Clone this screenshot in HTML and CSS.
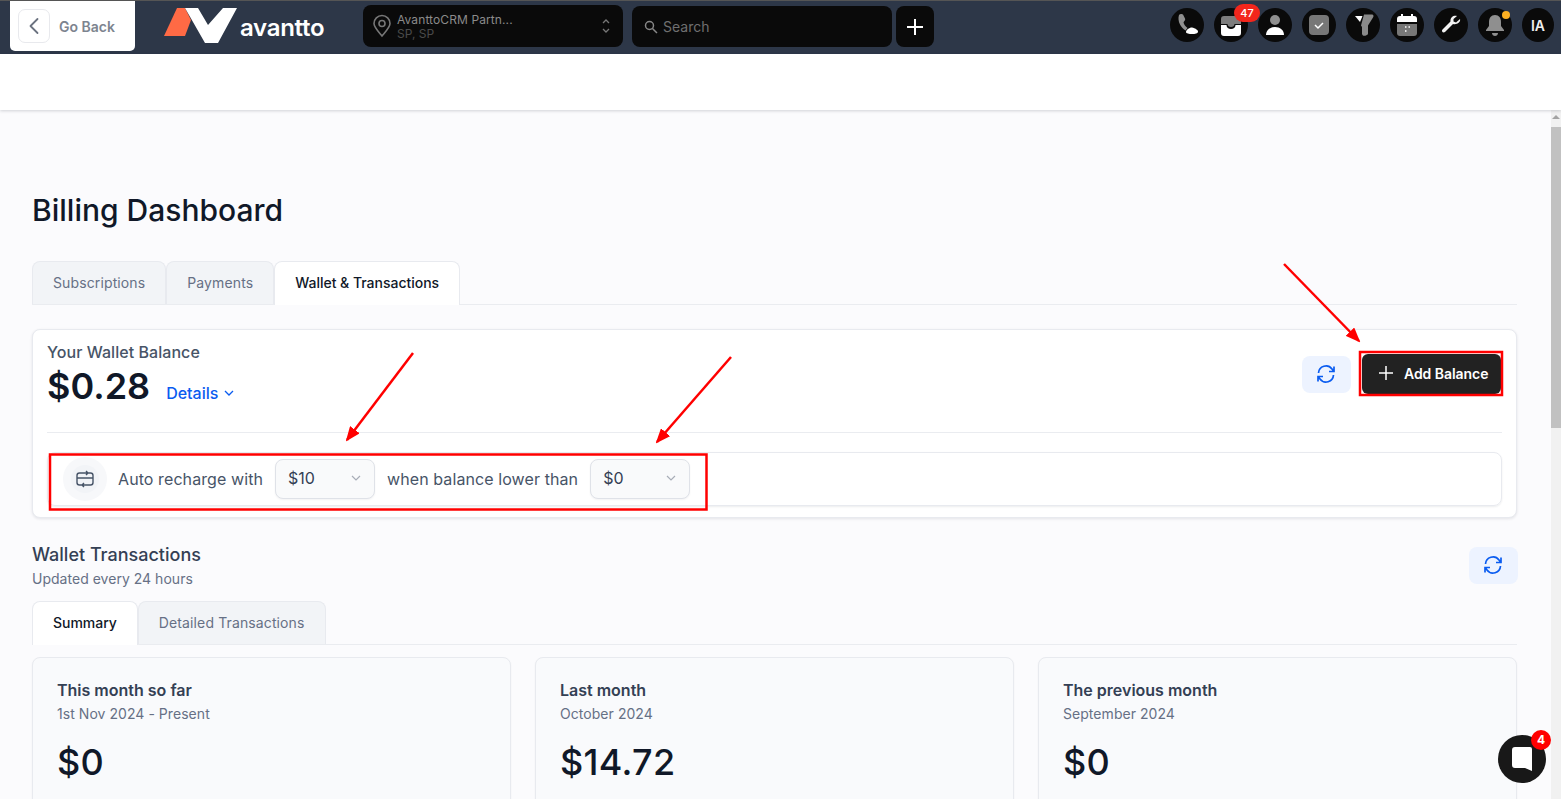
FILE: index.html
```html
<!DOCTYPE html>
<html lang="en">
<head>
<meta charset="utf-8">
<title>Billing Dashboard</title>
<link rel="stylesheet" href="styles.css">
</head>
<body>
<div class="page">
  <header class="topbar">
    <div class="back">
      <span class="back-btn"><svg width="12" height="18" viewBox="0 0 12 18"><path d="M9.500 2 2.500 9l7 7" fill="none" stroke="#6b7280" stroke-width="1.800" stroke-linecap="round" stroke-linejoin="round"/></svg></span>
      <span class="back-text">Go Back</span>
    </div>
    <div class="logo">
      <svg width="74" height="36" viewBox="0 0 74 36"><path d="M1 28 14 0h8l6 12-6 16z" fill="#ff6a45"/><path d="M22 0h13l10 17L60 0h14L55 35H42z" fill="#fff"/></svg>
      <span class="logo-text">avantto</span>
    </div>
    <div class="location">
      <svg width="20" height="24" viewBox="0 0 20 24"><path d="M10 22C5 16 2 13 2 9.500a8 8 0 0 1 16 0C18 13 15 16 10 22z" fill="none" stroke="#777" stroke-width="1.600"/><circle cx="10" cy="9.500" r="3" fill="none" stroke="#777" stroke-width="1.600"/></svg>
      <div class="loc-text"><div class="loc-name">AvanttoCRM Partn...</div><div class="loc-sub">SP, SP</div></div>
      <svg class="loc-caret" width="10" height="16" viewBox="0 0 10 16"><path d="M2 5l3-3 3 3M2 11l3 3 3-3" fill="none" stroke="#777" stroke-width="1.300"/></svg>
    </div>
    <div class="search">
      <svg width="14" height="14" viewBox="0 0 14 14"><circle cx="5.500" cy="5.500" r="4" fill="none" stroke="#888" stroke-width="1.500"/><path d="M8.500 8.500 13 13" stroke="#888" stroke-width="1.500"/></svg>
      <span>Search</span>
    </div>
    <div class="plus"><svg width="16" height="16" viewBox="0 0 16 16"><path d="M8 0v16M0 8h16" stroke="#fff" stroke-width="2"/></svg></div>
    <div class="icons">
      <span class="ico"><svg width="26" height="26" viewBox="0 0 26 26"><path d="M5 3c1-1 3-1.500 4-.5l2 4c.5 1 0 2-1 3l-.5 1c.5 2 2 4 4 5.500l-2 2.500C7 16 3 9 5 3z" fill="#8f8f8f"/><path d="M12 20c0-2 3-4.500 6-4.500 3 .5 6 2.500 6 4 0 2-3 2.500-6 2.500s-6-.5-6-2z" fill="#fff"/></svg></span>
      <span class="ico has-badge"><svg width="24" height="24" viewBox="0 0 24 24"><path d="M2 12h5.500c0 2.500 2 4 4.500 4s4.500-1.500 4.500-4H22v8a3 3 0 0 1-3 3H5a3 3 0 0 1-3-3z" fill="#fff"/><path d="M5 3h14a3 3 0 0 1 3 3v5h-6.500c0 2-1.500 3-3.500 3s-3.500-1-3.500-3H2V6a3 3 0 0 1 3-3z" fill="#7d7d7d"/></svg><span class="count">47</span></span>
      <span class="ico"><svg width="24" height="24" viewBox="0 0 24 24"><circle cx="12" cy="7" r="5" fill="#8f8f8f"/><path d="M3 22c0-5 4-8 9-8s9 3 9 8z" fill="#fff"/></svg></span>
      <span class="ico"><svg width="22" height="22" viewBox="0 0 22 22"><rect x="1" y="1" width="20" height="20" rx="4" fill="#777"/><path d="M7 11l3 3 5-5" fill="none" stroke="#fff" stroke-width="1.500"/></svg></span>
      <span class="ico"><svg width="24" height="24" viewBox="0 0 24 24"><path d="M13 1.500h8c1.500 0 2 1.500 1 3L17 12.500v8c0 1-1 1.500-2 2-1.500.5-3.500.5-4-1.500v-7l-1-1.500z" fill="#8a8a8a"/><path d="M4 3h7.500L9 9z" fill="#fff"/></svg></span>
      <span class="ico"><svg width="22" height="24" viewBox="0 0 22 24"><path d="M6 1v4M16 1v4" stroke="#fff" stroke-width="2"/><path d="M1 9V6a3 3 0 0 1 3-3h14a3 3 0 0 1 3 3v3z" fill="#fff"/><path d="M1 11h20v9a3 3 0 0 1-3 3H4a3 3 0 0 1-3-3z" fill="#777"/><path d="M9 14h1.500M12.500 14H14M9 18h1.500" stroke="#fff" stroke-width="1.500"/></svg></span>
      <span class="ico"><svg width="22" height="22" viewBox="0 0 22 22"><path d="M20 5l-4 3.500-2.500-1V5L17 2c-3-1-7 1-6.500 5.500L2.500 15.500c-1.500 1.500.5 4 2.500 2.500l8-8C17 11 21 8 20 5z" fill="#f2f2f2"/></svg></span>
      <span class="ico has-dot"><svg width="22" height="24" viewBox="0 0 22 24"><path d="M11 2c4 0 6 3 6 7v4l3 4v1H2v-1l3-4V9c0-4 2-7 6-7z" fill="#8f8f8f"/><path d="M8 20h6c0 2-1.500 3-3 3s-3-1-3-3z" fill="#8f8f8f"/></svg><span class="dot"></span></span>
      <span class="ico ico-text">IA</span>
    </div>
  </header>
  <div class="subbar"></div>
  <div class="body-row">
    <main class="main">
      <h1 class="title">Billing Dashboard</h1>
      <nav class="tabs tabs-top">
        <span class="tab">Subscriptions</span>
        <span class="tab">Payments</span>
        <span class="tab active">Wallet &amp; Transactions</span>
      </nav>
      <section class="wallet">
        <div class="wallet-head">
          <div>
            <div class="wallet-label">Your Wallet Balance</div>
            <div class="wallet-amt-row">
              <span class="wallet-amt">$0.28</span>
              <span class="details">Details <svg width="10" height="6" viewBox="0 0 10 6"><path d="M1 1l4 4 4-4" fill="none" stroke="#0a5cf0" stroke-width="1.300"/></svg></span>
            </div>
          </div>
          <div class="wallet-actions">
            <button class="refresh"><svg width="20" height="20" viewBox="0 0 20 20"><path d="M2.500 9a7.500 7.500 0 0 1 13.500-4l1.500 2M17.500 11a7.500 7.500 0 0 1-13.500 4l-1.500-2M18 2.500v5h-5M2 17.500v-5h5" fill="none" stroke="#0a5cf0" stroke-width="1.700"/></svg></button>
            <button class="add"><svg width="14" height="14" viewBox="0 0 14 14"><path d="M7 0v14M0 7h14" stroke="#fff" stroke-width="1.500"/></svg>Add Balance</button>
          </div>
        </div>
        <div class="recharge">
          <span class="rc-icon"><span class="rc-inner"><svg width="20" height="20" viewBox="0 0 20 20"><path d="M8 4H4.500A2.500 2.500 0 0 0 2 6.500v7A2.500 2.500 0 0 0 4.500 16H8M12 4h3.500A2.500 2.500 0 0 1 18 6.500v7a2.500 2.500 0 0 1-2.500 2.500H12M2 9h16M7 4h6M11 2l2 2-2 2M13 16H7M9 14l-2 2 2 2" fill="none" stroke="#475467" stroke-width="1.400"/></svg></span></span>
          <span class="rc-text">Auto recharge with</span>
          <span class="select">$10<svg width="10" height="6" viewBox="0 0 10 6"><path d="M1 1l4 4 4-4" fill="none" stroke="#a8adb7" stroke-width="1.200"/></svg></span>
          <span class="rc-text">when balance lower than</span>
          <span class="select">$0<svg width="10" height="6" viewBox="0 0 10 6"><path d="M1 1l4 4 4-4" fill="none" stroke="#a8adb7" stroke-width="1.200"/></svg></span>
        </div>
      </section>
      <section class="tx-head">
        <div>
          <h2 class="tx-title">Wallet Transactions</h2>
          <div class="tx-sub">Updated every 24 hours</div>
        </div>
        <button class="refresh"><svg width="20" height="20" viewBox="0 0 20 20"><path d="M2.500 9a7.500 7.500 0 0 1 13.500-4l1.500 2M17.500 11a7.500 7.500 0 0 1-13.500 4l-1.500-2M18 2.500v5h-5M2 17.500v-5h5" fill="none" stroke="#0a5cf0" stroke-width="1.700"/></svg></button>
      </section>
      <nav class="tabs tabs-sub">
        <span class="tab active">Summary</span>
        <span class="tab">Detailed Transactions</span>
      </nav>
      <section class="cards">
        <article class="card"><h3>This month so far</h3><p>1st Nov 2024 - Present</p><div class="amt">$0</div></article>
        <article class="card"><h3>Last month</h3><p>October 2024</p><div class="amt">$14.72</div></article>
        <article class="card"><h3>The previous month</h3><p>September 2024</p><div class="amt">$0</div></article>
      </section>
    </main>
    <aside class="scrollbar"><span class="arrow-up"></span><span class="thumb"></span></aside>
  </div>
  <svg class="annot" width="1561" height="799" viewBox="0 0 1561 799">
    <defs><marker id="ah" markerWidth="15" markerHeight="12" refX="13" refY="6" orient="auto" markerUnits="userSpaceOnUse"><path d="M0 0 15 6 0 12z" fill="#f00"/></marker></defs>
    <path d="M1284 264 1359 341" stroke="#f00" stroke-width="2.500" fill="none" marker-end="url(#ah)"/>
    <path d="M413 353 347 440" stroke="#f00" stroke-width="2.500" fill="none" marker-end="url(#ah)"/>
    <path d="M731 357 657 442" stroke="#f00" stroke-width="2.500" fill="none" marker-end="url(#ah)"/>
    <rect x="1360" y="352" width="142" height="43" fill="none" stroke="#f00" stroke-width="2.500"/>
    <rect x="50" y="454.500" width="656.500" height="55" fill="none" stroke="#f00" stroke-width="2.500"/>
  </svg>
  <div class="chat">
    <svg width="24" height="26" viewBox="0 0 24 26"><path d="M5 1h15a2 2 0 0 1 2 2v22l-7-3H5a3 3 0 0 1-3-3V4a3 3 0 0 1 3-3z" fill="#fff"/></svg>
    <span class="chat-badge">4</span>
  </div>
</div>
</body>
</html>
```
FILE: styles.css
```css
* { box-sizing: border-box; }
html, body { margin: 0; padding: 0; }
body { font-family: Inter, "Liberation Sans", sans-serif; color: #101828; background: #fbfbfd; overflow: hidden; }
.page { position: relative; width: 1561px; height: 799px; overflow: hidden; display: flex; flex-direction: column; }

.topbar { height: 54px; flex: none; display: flex; align-items: flex-start; background: #2d3748; border-top: 1px solid #555; padding-left: 10px; }
.back { width: 125px; height: 50px; background: #fff; border-radius: 0 0 5px 5px; display: flex; align-items: center; padding-left: 8px; gap: 9px; }
.back-btn { width: 32px; height: 34px; border: 1px solid #e8e9ed; border-radius: 7px; display: flex; align-items: center; justify-content: center; }
.back-text { font-size: 14px; font-weight: 600; color: #7d848f; }
.logo { margin-left: 28px; margin-top: 7px; width: 200px; flex: none; display: flex; align-items: flex-end; gap: 3px; }
.logo-text { font-size: 24px; line-height: 30px; font-weight: 600; color: #fff; letter-spacing: -.3px; padding-bottom: 1px; }
.location { width: 260px; height: 42px; margin: 4px 0 0 0; flex: none; background: #0a0a0a; border-radius: 8px; display: flex; align-items: center; padding: 0 12px 0 9px; gap: 5px; }
.loc-text { flex: 1; padding-top: 1px; }
.loc-name { font-size: 12px; line-height: 14px; color: #8b8b8b; letter-spacing: .1px; }
.loc-sub { font-size: 12px; line-height: 14px; color: #4a4a4a; }
.search { width: 260px; height: 41px; margin: 5px 0 0 9px; flex: none; background: #0a0a0a; border-radius: 8px; display: flex; align-items: center; padding-left: 12px; gap: 5px; font-size: 14px; color: #6f6f6f; }
.plus { width: 38px; height: 41px; margin: 5px 0 0 4px; flex: none; background: #0a0a0a; border-radius: 8px; display: flex; align-items: center; justify-content: center; }
.icons { margin: 7px 0 0 236px; display: flex; gap: 10px; flex: none; }
.ico { position: relative; width: 34px; height: 34px; background: #0a0a0a; border-radius: 50%; display: flex; align-items: center; justify-content: center; }
.ico-text { width: 32px; font-size: 14px; font-weight: 600; color: #eee; }
.count { position: absolute; top: -4px; left: 20px; width: 26px; height: 18px; background: #f3261c; border-radius: 9px; color: #fff; font-size: 11px; font-weight: 500; line-height: 18px; text-align: center; }
.dot { position: absolute; top: 3px; left: 24px; width: 8px; height: 8px; background: #fdb022; border-radius: 50%; }

.subbar { height: 56px; flex: none; background: #fff; box-shadow: 0 1px 3px rgba(16,24,40,.18); position: relative; }
.body-row { flex: 1; display: flex; min-height: 0; }
.main { flex: 1; min-width: 0; padding: 0 34px 0 32px; }
.scrollbar { width: 10px; flex: none; background: #f1f1f1; display: flex; flex-direction: column; align-items: center; padding-top: 5px; }
.arrow-up { width: 0; height: 0; border-left: 4px solid transparent; border-right: 4px solid transparent; border-bottom: 4px solid #a3a3a3; margin-bottom: 8px; }
.thumb { display: block; width: 10px; height: 301px; background: #c1c1c1; }

.title { margin: 82px 0 33px; font-size: 30px; line-height: 36px; font-weight: 500; color: #101828; }
.tabs { display: flex; border-bottom: 1px solid #eaecf0; height: 44px; }
.tab { padding: 0 20px; height: 43px; line-height: 42px; font-size: 14px; letter-spacing: .12px; color: #667085; background: #f2f4f7; border: 1px solid #e8eaef; border-bottom: 0; border-radius: 8px 8px 0 0; }
.tab.active { background: #fff; color: #101828; font-weight: 500; height: 44px; letter-spacing: -.02px; }

.wallet { margin-top: 24px; height: 189px; background: #fff; border: 1px solid #e8eaef; border-radius: 8px; box-shadow: 0 1px 3px rgba(16,24,40,.1); padding: 0 14px; }
.wallet-head { display: flex; justify-content: space-between; height: 103px; border-bottom: 1px solid #eaecf0; margin-bottom: 19px; padding-top: 13px; padding-right: 1px; }
.wallet-label { font-size: 16px; line-height: 19px; font-weight: 500; color: #475467; letter-spacing: .05px; }
.wallet-amt-row { display: flex; align-items: center; gap: 16px; margin-top: 2px; }
.wallet-amt { font-size: 36px; line-height: 44px; font-weight: 600; color: #101828; }
.details { font-size: 16px; font-weight: 500; color: #0a5cf0; display: flex; align-items: center; gap: 6px; padding-top: 13px; }
.wallet-actions { display: flex; align-items: flex-start; gap: 11px; padding-top: 13px; }
.refresh { width: 49px; height: 37px; padding: 0 2px 2px 0; border: 0; border-radius: 8px; background: #edf3ff; display: flex; align-items: center; justify-content: center; }
.add { width: 139px; height: 40px; margin-top: -2px; border: 0; border-radius: 6px; background: #222; color: #fff; font: 600 14px Inter, sans-serif; letter-spacing: -.05px; display: flex; align-items: center; gap: 11px; padding: 0 0 2px 17px; }
.recharge { height: 54px; border: 1px solid #e8eaef; border-radius: 8px; box-shadow: 0 1px 2px rgba(16,24,40,.08); display: flex; align-items: center; padding-left: 15px; }
.rc-icon { width: 44px; height: 44px; border-radius: 50%; background: #f7f8fa; display: flex; align-items: center; justify-content: center; margin-right: 11px; }
.rc-inner { width: 28px; height: 28px; border-radius: 50%; background: #f2f4f7; display: flex; align-items: center; justify-content: center; }
.rc-text { font-size: 16px; color: #475467; letter-spacing: .09px; }
.select { width: 100px; height: 40px; margin: 0 12px; background: #f9fafb; border: 1px solid #dfe2e8; border-radius: 8px; box-shadow: 0 1px 2px rgba(16,24,40,.05); font-size: 16px; color: #344054; display: flex; align-items: center; justify-content: space-between; padding: 0 13px 2px 12px; }

.tx-head { display: flex; justify-content: space-between; align-items: flex-start; margin-top: 26px; height: 57px; }
.tx-title { margin: 0; font-size: 18px; line-height: 22px; font-weight: 500; color: #344054; }
.tx-sub { margin-top: 4px; font-size: 14px; line-height: 18px; color: #667085; letter-spacing: .02px; }
.tx-head .refresh { margin: 3px -1px 0 0; }
.cards { margin-top: 12px; display: grid; grid-template-columns: repeat(3, 479px); gap: 24px; }
.card { height: 160px; background: #f9fafc; border: 1px solid #e8eaef; border-radius: 8px; padding: 22px 24px; box-shadow: 0 1px 2px rgba(16,24,40,.05); }
.card h3 { margin: 0; font-size: 16px; line-height: 20px; font-weight: 600; color: #344054; }
.card p { margin: 5px 0 0; font-size: 14px; line-height: 18px; color: #667085; letter-spacing: .05px; }
.amt { margin-top: 17px; font-size: 36px; line-height: 44px; font-weight: 500; letter-spacing: .3px; color: #101828; }

.annot { position: absolute; left: 0; top: 0; pointer-events: none; }
.chat { position: absolute; left: 1498px; top: 735px; width: 48px; height: 48px; border-radius: 50%; background: #181818; display: flex; align-items: center; justify-content: center; }
.chat-badge { position: absolute; top: -5px; right: -5px; width: 20px; height: 20px; border-radius: 50%; background: #f00; color: #fff; font-size: 12px; font-weight: 700; line-height: 20px; text-align: center; }
```
